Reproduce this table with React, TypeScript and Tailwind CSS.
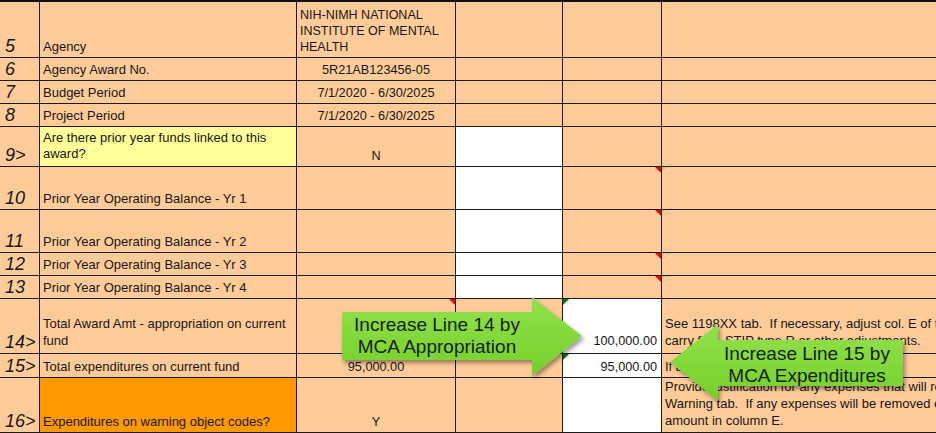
import React from "react";

const font = { fontFamily: '"Liberation Sans", Arial, sans-serif' };

type CellProps = {
  children?: React.ReactNode;
  className?: string;
  red?: boolean;
  green?: boolean;
  last?: boolean;
};

function Cell({ children, className = "", red, green, last }: CellProps) {
  return (
    <div
      className={
        "relative flex flex-col justify-end overflow-hidden border-b border-[#1a1a1a] leading-[16px] text-[#161616] " +
        (last ? "" : "border-r ") +
        (className.includes("bg-") ? "" : "bg-[#ffcc99] ") +
        (className.includes("text-[") ? "" : "text-[13px] ") +
        className
      }
    >
      {children}
      {red && (
        <span className="absolute top-0 right-0 h-0 w-0 border-t-[6px] border-l-[6px] border-t-[#ff0000] border-l-transparent" />
      )}
      {green && (
        <span className="absolute top-0 left-0 h-0 w-0 border-t-[6px] border-r-[6px] border-t-[#007a00] border-r-transparent" />
      )}
    </div>
  );
}

function Num({ n }: { n: string }) {
  return (
    <Cell className="pl-[5px] pb-[1px]">
      <span className="text-[18px] italic leading-[20px] whitespace-nowrap">{n}</span>
    </Cell>
  );
}

const lab = "px-[3px] pb-[2px] whitespace-nowrap";
const mid = "items-center pb-[2px] text-[12.7px] whitespace-nowrap";

export default function App() {
  return (
    <div className="relative h-[433px] w-[936px] overflow-hidden bg-[#ffcc99]" style={font}>
      <div className="grid grid-cols-[40px_257px_159px_107px_99px_274px] grid-rows-[56px_23px_23px_23px_40px_43px_43px_23px_23px_55px_24px_55px] border-t-2 border-[#111]">
        {/* Row 5 */}
        <Num n="5" />
        <Cell className={lab}>Agency</Cell>
        <Cell className="px-[3px] pb-[2px] text-[12.5px] leading-[16.7px] whitespace-nowrap">
          <span>NIH-NIMH NATIONAL</span>
          <span>INSTITUTE OF MENTAL</span>
          <span>HEALTH</span>
        </Cell>
        <Cell />
        <Cell />
        <Cell last />

        {/* Row 6 */}
        <Num n="6" />
        <Cell className={lab}>Agency Award No.</Cell>
        <Cell className={mid}>5R21AB123456-05</Cell>
        <Cell />
        <Cell />
        <Cell last />

        {/* Row 7 */}
        <Num n="7" />
        <Cell className={lab}>Budget Period</Cell>
        <Cell className={mid}>7/1/2020 - 6/30/2025</Cell>
        <Cell />
        <Cell />
        <Cell last />

        {/* Row 8 */}
        <Num n="8" />
        <Cell className={lab}>Project Period</Cell>
        <Cell className={mid}>7/1/2020 - 6/30/2025</Cell>
        <Cell />
        <Cell />
        <Cell last />

        {/* Row 9 */}
        <Num n="9>" />
        <Cell className="bg-[#ffff99] px-[3px] pb-[4px] whitespace-nowrap">
          <span>Are there prior year funds linked to this</span>
          <span>award?</span>
        </Cell>
        <Cell className={mid}>N</Cell>
        <Cell className="bg-white" />
        <Cell />
        <Cell last />

        {/* Row 10 */}
        <Num n="10" />
        <Cell className={lab}>Prior Year Operating Balance - Yr 1</Cell>
        <Cell />
        <Cell className="bg-white" />
        <Cell red />
        <Cell last />

        {/* Row 11 */}
        <Num n="11" />
        <Cell className={lab}>Prior Year Operating Balance - Yr 2</Cell>
        <Cell />
        <Cell className="bg-white" />
        <Cell red />
        <Cell last />

        {/* Row 12 */}
        <Num n="12" />
        <Cell className={lab}>Prior Year Operating Balance - Yr 3</Cell>
        <Cell />
        <Cell className="bg-white" />
        <Cell red />
        <Cell last />

        {/* Row 13 */}
        <Num n="13" />
        <Cell className={lab}>Prior Year Operating Balance - Yr 4</Cell>
        <Cell />
        <Cell className="bg-white" />
        <Cell red />
        <Cell last />

        {/* Row 14 */}
        <Num n="14>" />
        <Cell className="px-[3px] pb-[4px] leading-[17px] whitespace-nowrap">
          <span>Total Award Amt - appropriation on current</span>
          <span>fund</span>
        </Cell>
        <Cell red />
        <Cell />
        <Cell green className="bg-white items-end pr-[4px] pb-[4px] text-[12.7px] whitespace-nowrap">100,000.00</Cell>
        <Cell last className="px-[3px] pb-[4px] leading-[17px] whitespace-pre">
          <span>See 1198XX tab.  If necessary, adjust col. E of the</span>
          <span>carry fwd, STIP type R or other adjustments.</span>
        </Cell>

        {/* Row 15 */}
        <Num n="15>" />
        <Cell className={lab}>Total expenditures on current fund</Cell>
        <Cell className={mid}>95,000.00</Cell>
        <Cell />
        <Cell green className="bg-white items-end pr-[4px] pb-[2px] text-[12.7px] whitespace-nowrap">95,000.00</Cell>
        <Cell last className={lab}>If applicable, adjust amount.</Cell>

        {/* Row 16 */}
        <Num n="16>" />
        <Cell className="bg-[#ff9900] px-[3px] pb-[2px] whitespace-nowrap">Expenditures on warning object codes?</Cell>
        <Cell className={mid}>Y</Cell>
        <Cell />
        <Cell className="bg-white" />
        <Cell last className="px-[3px] pb-[3px] leading-[17px] whitespace-pre">
          <span>Provide justification for any expenses that will remain on the</span>
          <span>Warning tab.  If any expenses will be removed enter the</span>
          <span>amount in column E.</span>
        </Cell>
      </div>

      {/* Callout arrows (overlay) */}
      <svg
        className="pointer-events-none absolute left-0 top-0"
        width="936"
        height="433"
        viewBox="0 0 936 433"
      >
        <defs>
          <linearGradient id="g1" x1="0" y1="0" x2="0" y2="1">
            <stop offset="0" stopColor="#92e24c" />
            <stop offset="1" stopColor="#74cf2a" />
          </linearGradient>
          <filter id="sh" x="-10%" y="-20%" width="130%" height="150%">
            <feDropShadow dx="2" dy="3" stdDeviation="2" floodColor="#000" floodOpacity="0.4" />
          </filter>
        </defs>
        <polygon
          points="342,312 532,312 532,297 582,336 532,376 532,360 342,360"
          fill="url(#g1)"
          filter="url(#sh)"
        />
        <polygon
          points="903,340 718,340 718,324 670,362 718,401 718,386 903,386"
          fill="url(#g1)"
          filter="url(#sh)"
        />
      </svg>
      <div className="pointer-events-none absolute left-[342px] top-[312px] flex h-[48px] w-[190px] flex-col items-center justify-center whitespace-nowrap text-[19px] leading-[22px] text-[#17200c]">
        <span>Increase Line 14 by</span>
        <span>MCA Appropriation</span>
      </div>
      <div className="pointer-events-none absolute left-[712px] top-[342px] flex h-[46px] w-[190px] flex-col items-center justify-center whitespace-nowrap text-[19px] leading-[22px] text-[#17200c]">
        <span>Increase Line 15 by</span>
        <span>MCA Expenditures</span>
      </div>
    </div>
  );
}
